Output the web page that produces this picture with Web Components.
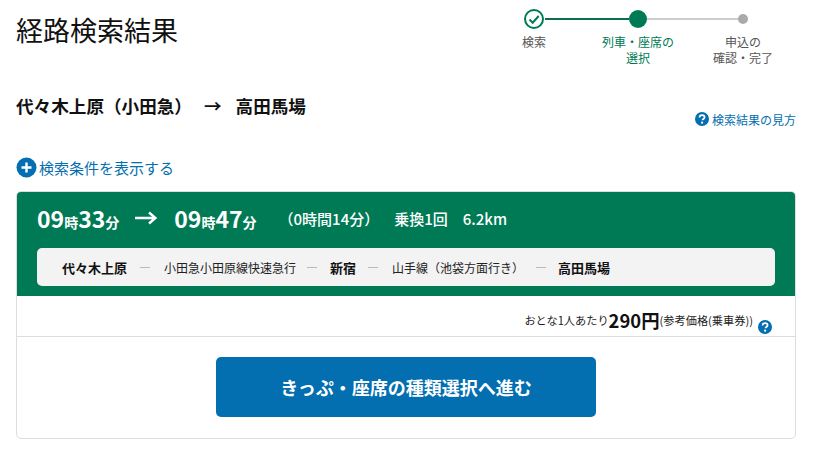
<!DOCTYPE html>
<html lang="ja">
<head>
<meta charset="utf-8">
<title>経路検索結果</title>
<style>
  html, body { margin: 0; background: #fff; }
  body { font-family: "Noto Sans CJK JP", "Noto Sans", sans-serif; color: #000; }
</style>
</head>
<body>
<route-page></route-page>

<script>
const HELP_ICON = (size) => `
  <svg width="${size}" height="${size}" viewBox="0 0 16 16" aria-hidden="true">
    <circle cx="8" cy="8" r="8" fill="#036eb0"/>
    <path d="M5.200 6.200c0-1.600 1.200-2.600 2.900-2.600 1.600 0 2.800 1 2.800 2.300 0 1-.6 1.600-1.400 2.100-.6.4-.9.7-.9 1.400" fill="none" stroke="#fff" stroke-width="2"/>
    <circle cx="8.100" cy="12.200" r="1.300" fill="#fff"/>
  </svg>`;

class StepProgress extends HTMLElement {
  connectedCallback() {
    this.attachShadow({ mode: 'open' }).innerHTML = `
      <style>
        :host { display: block; width: 314px; font-size: 12px; line-height: 16px; }
        .track { display: grid; grid-template-columns: 22px 84px 18px 91px 10px; align-items: center; height: 22px; margin-left: 41px; }
        .line { height: 2px; }
        .done { width: 22px; height: 22px; }
        .now { width: 18px; height: 18px; border-radius: 50%; background: #007a54; }
        .todo { width: 10px; height: 10px; border-radius: 50%; background: #aaa; }
        .labels { display: grid; grid-template-columns: 104px 104px 106px; margin-top: 4px; text-align: center; color: #555; }
        .labels .on { color: #007a54; }
      </style>
      <div class="track">
        <svg class="done" viewBox="0 0 22 22" aria-hidden="true">
          <circle cx="11" cy="11" r="9" fill="#fff" stroke="#007a54" stroke-width="2"/>
          <path d="M6.500 11.500l3.200 3.200 6-6.700" fill="none" stroke="#007a54" stroke-width="2"/>
        </svg>
        <div class="line" style="background:#0a6e4f"></div>
        <div class="now"></div>
        <div class="line" style="background:#ccc"></div>
        <div class="todo"></div>
      </div>
      <div class="labels">
        <div>検索</div>
        <div class="on">列車・座席の<br>選択</div>
        <div>申込の<br>確認・完了</div>
      </div>`;
  }
}
customElements.define('step-progress', StepProgress);

class RouteLine extends HTMLElement {
  connectedCallback() {
    this.attachShadow({ mode: 'open' }).innerHTML = `
      <style>
        :host { display: flex; align-items: center; height: 38px; padding-left: 25px; border-radius: 5px; background: #f3f3f3; font-size: 12px; color: #222; }
        b { font-size: 13px; font-weight: 700; color: #111; }
        i { width: 10px; height: 1px; background: #bbb; margin: 0 12px; }
      </style>
      <b>代々木上原</b><i style="margin:0 14px 0 13px"></i><span>小田急小田原線快速急行</span><i style="margin:0 13px 0 11px"></i>
      <b>新宿</b><i style="margin:0 14px 0 12px"></i><span>山手線（池袋方面行き）</span><i></i><b>高田馬場</b>`;
  }
}
customElements.define('route-line', RouteLine);

class ResultCard extends HTMLElement {
  connectedCallback() {
    this.attachShadow({ mode: 'open' }).innerHTML = `
      <style>
        :host { display: block; margin-top: 13px; border: 1px solid #ddd; border-radius: 5px; overflow: hidden; }
        .head { background: #007a54; color: #fff; padding: 0 20px; height: 104px; }
        .times { display: flex; align-items: center; box-sizing: border-box; height: 56px; padding-bottom: 4px; font-weight: 700; font-size: 23px; line-height: 1; }
        .times small { font-size: 14px; }
        .arrow { margin: 0 17px 0 16px; width: 22px; height: 14px; }
        .sub { font-size: 15px; font-weight: 500; margin-left: 15px; }
        .price { display: flex; justify-content: flex-end; align-items: center; box-sizing: border-box; height: 41px; padding: 8px 23px 0 0; border-bottom: 1px solid #ddd; font-size: 11.200px; color: #222; }
        .price b { font-size: 18.400px; color: #111; }
        .price svg { margin: 14px 0 0 5px; }
        .action { display: flex; justify-content: center; padding: 20px 0 21px; }
        button { width: 380px; height: 60px; border: 0; border-radius: 5px; background: #036eb0; color: #fff; font: 700 18px "Noto Sans CJK JP", sans-serif; }
      </style>
      <div class="head">
        <div class="times">
          <span>09<small>時</small>33<small>分</small></span>
          <svg class="arrow" viewBox="0 0 22 14" aria-hidden="true"><path d="M0 7h20M14 1.500L20.500 7 14 12.500" fill="none" stroke="#fff" stroke-width="2.400"/></svg>
          <span>09<small>時</small>47<small>分</small></span>
          <span class="sub" style="margin-left:22px">（0時間14分）</span>
          <span class="sub">乗換1回</span>
          <span class="sub">6.2km</span>
        </div>
        <route-line></route-line>
      </div>
      <div class="price">おとな1人あたり<b>290円</b>(参考価格(乗車券))${HELP_ICON(14)}</div>
      <div class="action"><button>きっぷ・座席の種類選択へ進む</button></div>`;
  }
}
customElements.define('result-card', ResultCard);

class RoutePage extends HTMLElement {
  connectedCallback() {
    this.attachShadow({ mode: 'open' }).innerHTML = `
      <style>
        :host { display: block; padding: 0 18px 13px 16px; }
        .top { display: flex; justify-content: space-between; height: 70px; padding-top: 8px; }
        h1 { margin: 2px 0 0; font-size: 27px; line-height: 40px; font-weight: 400; color: #111; }
        .mid { display: flex; justify-content: space-between; height: 78px; }
        h2 { margin: 16px 0 0; font-size: 17.600px; line-height: 24px; font-weight: 700; color: #111; }
        h2 span { margin: 0 14px 0 12px; }
        .help { display: flex; align-items: center; gap: 3px; margin-top: 33px; height: 16px; font-size: 12px; color: #036eb0; }
        .toggle { display: flex; align-items: center; gap: 2px; height: 22px; font-size: 15px; color: #036eb0; }
      </style>
      <div class="top">
        <h1>経路検索結果</h1>
        <step-progress></step-progress>
      </div>
      <div class="mid">
        <h2>代々木上原（小田急）<span>→</span>高田馬場</h2>
        <div class="help">${HELP_ICON(14)}検索結果の見方</div>
      </div>
      <div class="toggle">
        <svg width="21" height="21" viewBox="0 0 21 21" aria-hidden="true">
          <circle cx="10.500" cy="10.500" r="10" fill="#036eb0"/>
          <path d="M5.500 10.500h10M10.500 5.500v10" stroke="#fff" stroke-width="2.400"/>
        </svg>
        検索条件を表示する
      </div>
      <result-card></result-card>`;
  }
}
customElements.define('route-page', RoutePage);
</script>
</body>
</html>
